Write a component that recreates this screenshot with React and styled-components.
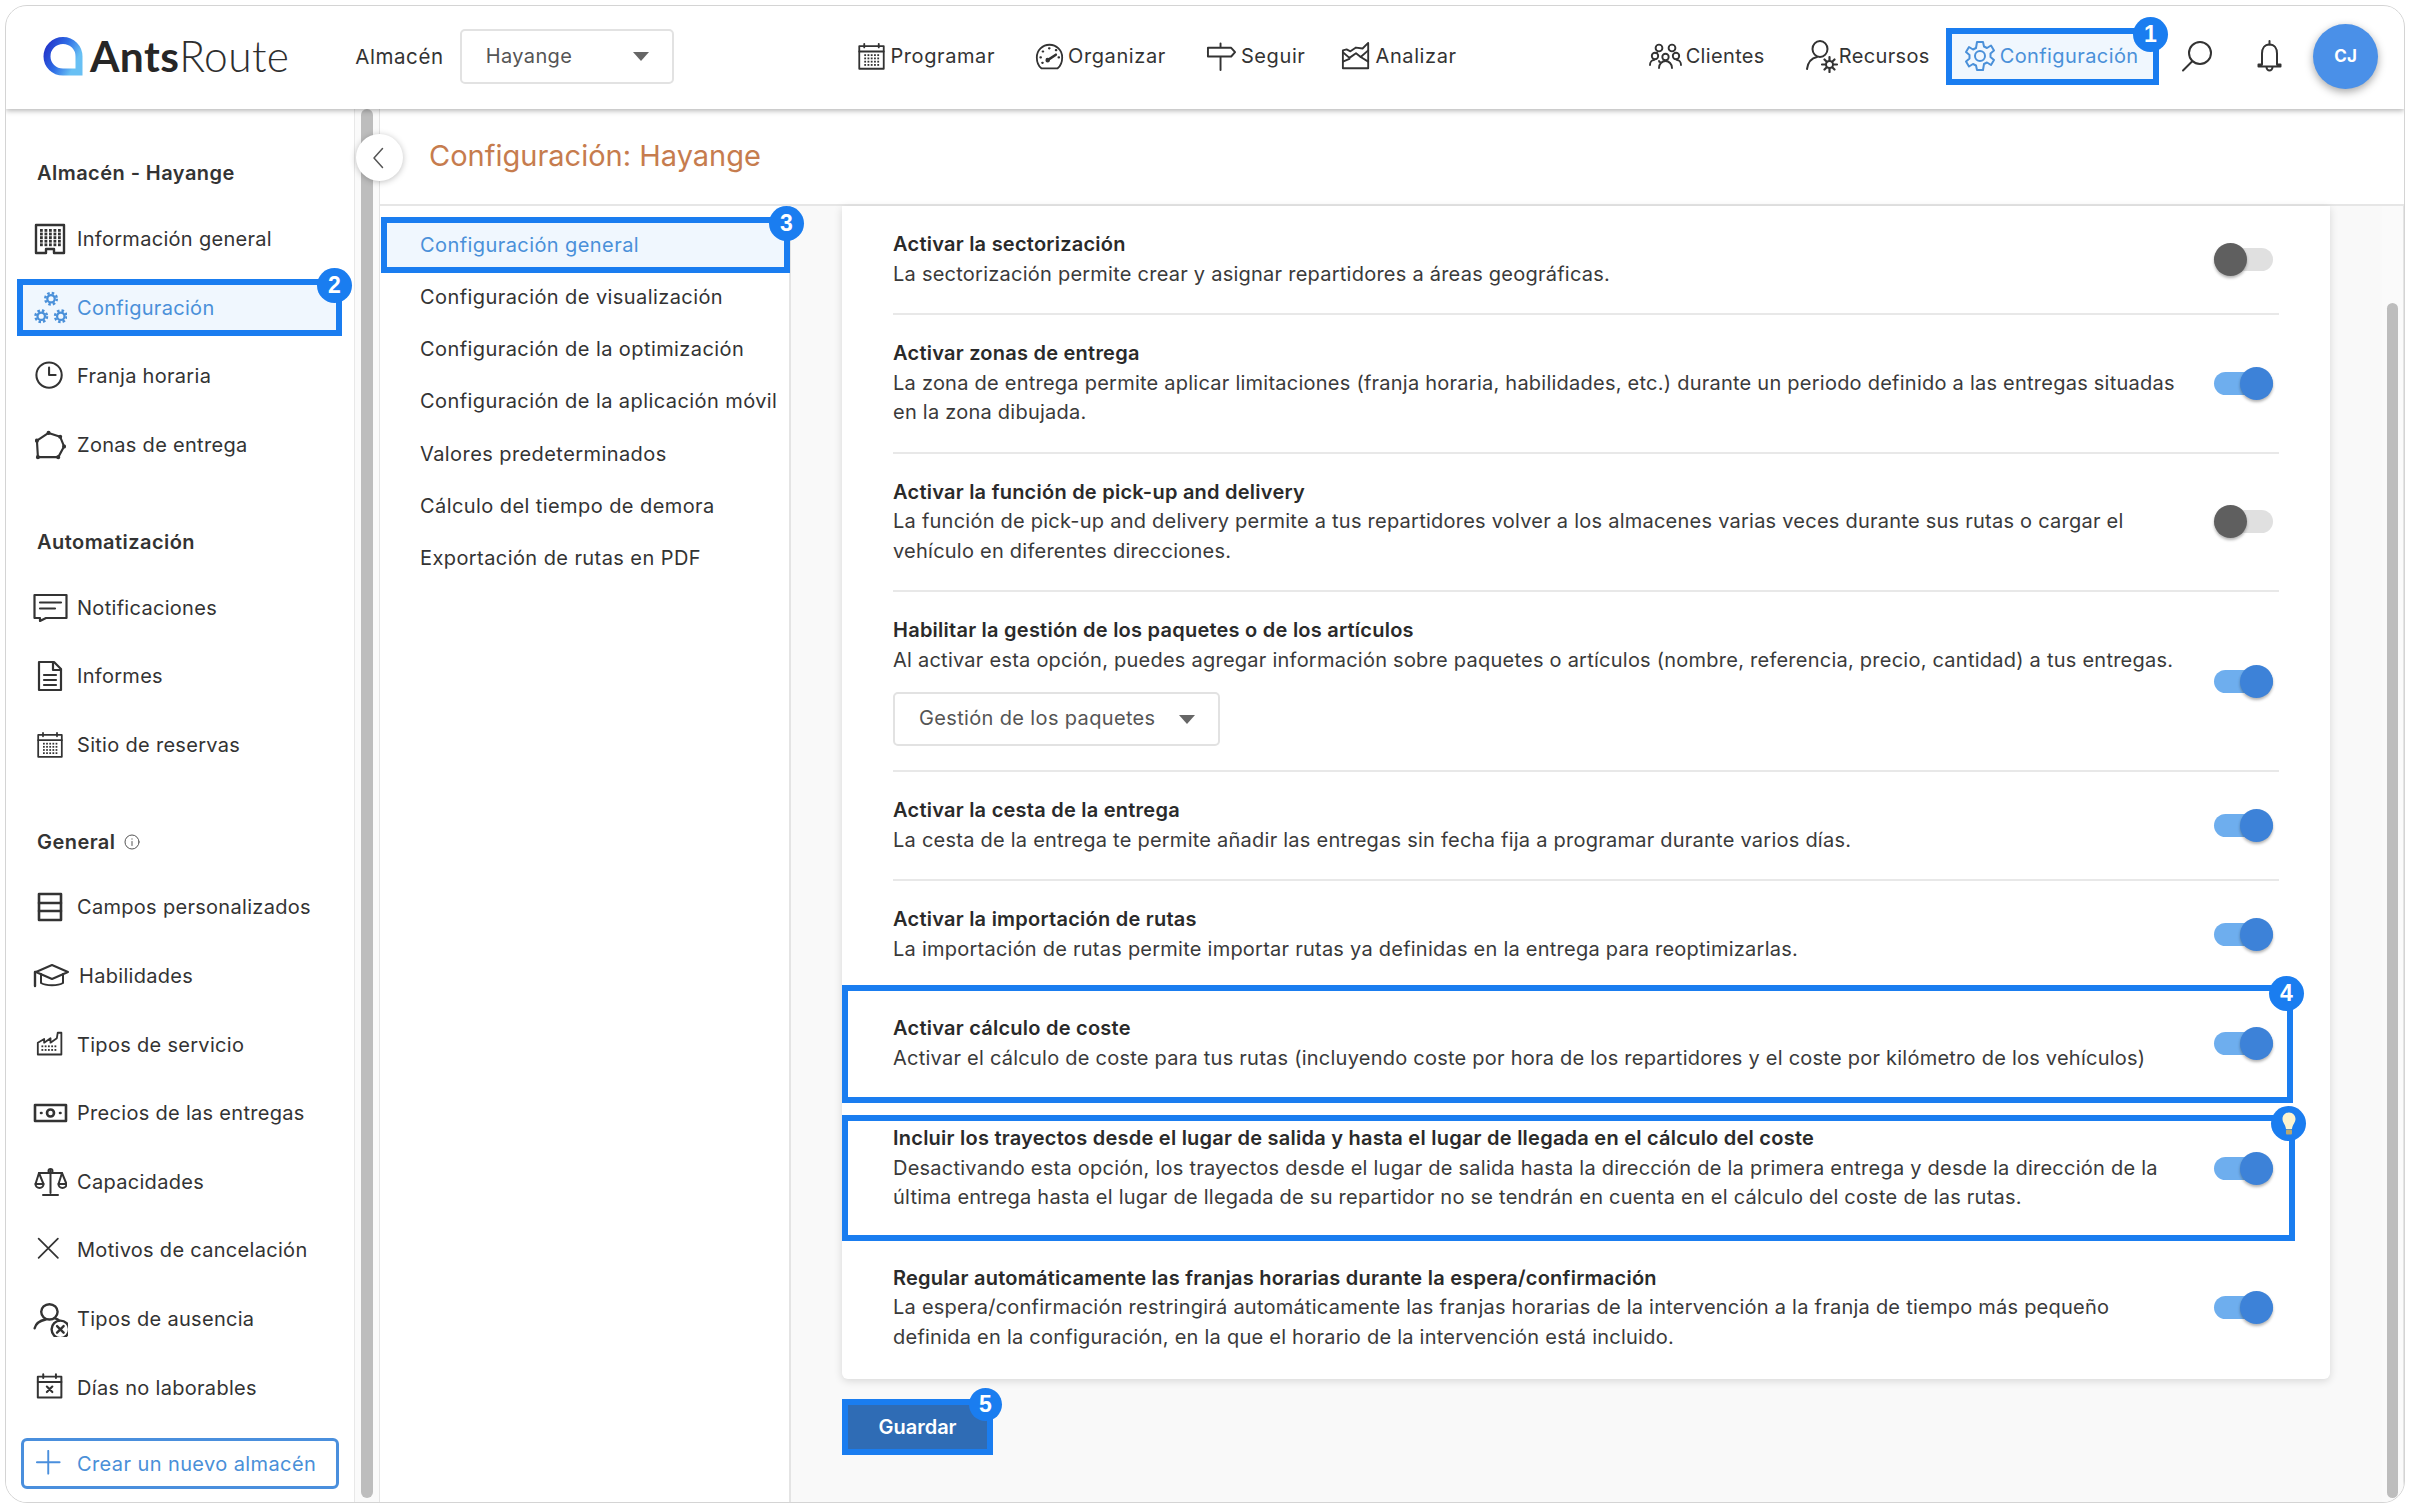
import React from 'react';
import styled, { createGlobalStyle } from 'styled-components';

const FONT = '"Inter", "Liberation Sans", sans-serif';
const BLUE = '#1a7df0';

const GlobalStyle = createGlobalStyle`
  html, body { margin: 0; padding: 0; background: #fff; }
  body { font-family: ${FONT}; color: #333; }
  * { box-sizing: border-box; }
`;

/* shell */
const Page = styled.div`
  width: 2410px;
  height: 1507px;
  padding: 5px 5px 4px 5px;
`;

const Frame = styled.div`
  position: relative;
  width: 100%;
  height: 100%;
  display: flex;
  flex-direction: column;
  border: 1px solid #d4d4d4;
  border-radius: 22px;
  overflow: hidden;
  background: #fff;
`;

/* header */
const Header = styled.header`
  position: relative;
  z-index: 3;
  flex: 0 0 103px;
  display: flex;
  align-items: center;
  padding: 0 26px 3px 36px;
  background: #fff;
  box-shadow: 0 2px 5px rgba(0, 0, 0, 0.28);
`;

const LogoWrap = styled.div`
  display: flex;
  align-items: center;
  gap: 6px;
  width: 314px;
`;

const LogoText = styled.div`
  font-family: "Lato", sans-serif;
  font-size: 42.5px;
  line-height: 50px;
  color: #2e2e2e;
  font-weight: 300;
  letter-spacing: 0.4px;
  b { font-weight: 700; color: #262626; }
`;

const FieldLabel = styled.span`
  font-size: 20.5px;
  letter-spacing: 0.6px;
  width: 105px;
  color: #333;
`;

const Select = styled.div`
  display: flex;
  align-items: center;
  justify-content: space-between;
  width: ${(p) => p.$width}px;
  height: ${(p) => p.$height}px;
  padding: 0 23px 0 24px;
  border: 2px solid #e2e2e2;
  border-radius: 5px;
  background: #fff;
  font-size: 20px;
  letter-spacing: 0.35px;
  color: #555;
`;

const Caret = styled.span`
  width: 0;
  height: 0;
  border-left: 8px solid transparent;
  border-right: 8px solid transparent;
  border-top: 9px solid #666;
`;

const NavGroup = styled.nav`
  display: flex;
  align-items: center;
  gap: ${(p) => p.$gap}px;
  margin-left: ${(p) => p.$offset}px;
`;

const NavItem = styled.div`
  position: relative;
  display: flex;
  align-items: center;
  gap: ${(p) => (p.$gap === undefined ? 4 : p.$gap)}px;
  margin-left: ${(p) => p.$pull || 0}px;
  font-size: 20px;
  letter-spacing: ${(p) => (p.$tight ? 0.35 : 0.6)}px;
  color: #333;
  white-space: nowrap;
`;

const HighlightNav = styled(NavItem)`
  width: 214px;
  height: 57px;
  margin-left: 16px;
  padding-left: 12px;
  border: 6px solid ${BLUE};
  background: #f0f7fe;
  color: #4a90d9;
  letter-spacing: 0.4px;
`;

const IconButton = styled.div`
  display: flex;
  margin-left: ${(p) => p.$offset}px;
`;

const Avatar = styled.div`
  width: 65px;
  height: 65px;
  margin-left: 31px;
  display: flex;
  align-items: center;
  justify-content: center;
  border-radius: 50%;
  background: #4a90e8;
  color: #fff;
  font-size: 17px;
  font-weight: 700;
  box-shadow: 0 3px 8px rgba(0, 0, 0, 0.35);
`;

const Step = styled.span`
  position: absolute;
  z-index: 2;
  top: ${(p) => p.$top}px;
  right: ${(p) => p.$right}px;
  width: ${(p) => p.$size || 35}px;
  height: ${(p) => p.$size || 35}px;
  display: flex;
  align-items: center;
  justify-content: center;
  border-radius: 50%;
  background: ${BLUE};
  color: #fff;
  font-family: "Liberation Sans", sans-serif;
  font-size: 23px;
  font-weight: 700;
`;

/* body */
const Body = styled.div`
  position: relative;
  flex: 1;
  min-height: 0;
  display: flex;
`;

const Sidebar = styled.aside`
  flex: 0 0 349px;
  padding: 0 12px 13px 11px;
  display: flex;
  flex-direction: column;
  background: #fff;
  border-right: 1px solid #e8e8e8;
`;

const SideTitle = styled.div`
  display: flex;
  align-items: center;
  gap: 8px;
  height: 30px;
  margin: ${(p) => p.$top}px 0 ${(p) => p.$bottom}px 20px;
  font-size: 20px;
  font-weight: 600;
  letter-spacing: 0.45px;
  color: #333;
`;

const SideItem = styled.div`
  position: relative;
  display: flex;
  align-items: center;
  height: ${(p) => (p.$active ? 57 : 68.6)}px;
  margin: ${(p) => (p.$active ? '5.8px 0' : '0')};
  padding-left: ${(p) => (p.$active ? 9 : 15)}px;
  border: ${(p) => (p.$active ? `6px solid ${BLUE}` : '0')};
  background: ${(p) => (p.$active ? '#f0f7fe' : 'transparent')};
  color: ${(p) => (p.$active ? '#4a90d9' : '#333')};
  font-size: 20px;
  letter-spacing: 0.3px;
  white-space: nowrap;
`;

const SideIcon = styled.span`
  flex: 0 0 36px;
  display: flex;
  justify-content: center;
  margin-right: 9px;
`;

const NewButton = styled.div`
  margin: auto 3px 0 4px;
  height: 51px;
  display: flex;
  align-items: center;
  gap: 13px;
  padding-left: 12px;
  border: 3px solid #4a8fdd;
  border-radius: 6px;
  color: #4a8fd8;
  font-size: 20px;
  letter-spacing: 0.4px;
  white-space: nowrap;
`;

const ScrollGutter = styled.div`
  flex: 0 0 ${(p) => p.$width}px;
  padding: ${(p) => p.$top}px ${(p) => p.$inner}px 4px;
  background: #fafafa;
  border-right: 1px solid #e4e4e4;
`;

const ScrollThumb = styled.div`
  height: 100%;
  background: #bdbdbd;
  border-radius: 7px;
`;

const Collapse = styled.button`
  position: absolute;
  z-index: 2;
  top: 25px;
  left: 350px;
  width: 47px;
  height: 47px;
  padding: 0 4px 0 0;
  display: flex;
  align-items: center;
  justify-content: center;
  border: 0;
  border-radius: 50%;
  background: #fff;
  box-shadow: 0 1px 6px rgba(0, 0, 0, 0.25);
`;

const Content = styled.main`
  flex: 1;
  min-width: 0;
  display: flex;
  flex-direction: column;
`;

const TitleBar = styled.div`
  flex: 0 0 97px;
  padding: 0 0 2px 49px;
  display: flex;
  align-items: center;
  border-bottom: 2px solid #e6e6e6;
  background: #fff;
  font-size: 29px;
  color: #c67c4e;
`;

const Columns = styled.div`
  flex: 1;
  min-height: 0;
  display: flex;
`;

const SubMenu = styled.div`
  flex: 0 0 411px;
  padding-top: 10.5px;
  border-right: 2px solid #e4e4e4;
  background: #fff;
`;

const SubItem = styled.div`
  position: relative;
  display: flex;
  align-items: center;
  height: ${(p) => (p.$active ? 56 : 52.3)}px;
  margin: ${(p) => (p.$active ? '0 -1px -2px 1px' : '0')};
  padding-left: ${(p) => (p.$active ? 33 : 40)}px;
  border: ${(p) => (p.$active ? `6px solid ${BLUE}` : '0')};
  background: ${(p) => (p.$active ? '#f0f7fe' : 'transparent')};
  color: ${(p) => (p.$active ? '#4a90d9' : '#333')};
  font-size: 20px;
  letter-spacing: 0.42px;
  white-space: nowrap;
`;

const SettingsPane = styled.div`
  flex: 1;
  min-width: 0;
  padding: 0 52px 0 51px;
  background: #f9f9f9;
`;

const Card = styled.section`
  padding: 0 51px;
  background: #fff;
  border-radius: 0 0 6px 6px;
  box-shadow: 0 2px 8px rgba(0, 0, 0, 0.14);
`;

const Row = styled.div`
  position: relative;
  display: flex;
  align-items: center;
  justify-content: space-between;
  padding: 24px 6px ${(p) => (p.$plain ? 27 : 24)}px 0;
  border-bottom: ${(p) => (p.$plain ? '0' : '2px solid #e8e8e8')};
`;

const RowText = styled.div`
  font-size: 20px;
  line-height: 29.5px;
  letter-spacing: 0.24px;
  color: #3a3a3a;
  white-space: nowrap;
`;

const RowTitle = styled.div`
  font-weight: 600;
  color: #2a2a2a;
`;

const SelectSlot = styled.div`
  margin: 17px 0 0;
`;

const Toggle = styled.span`
  position: relative;
  flex: 0 0 59px;
  height: 23px;
  border-radius: 12px;
  background: ${(p) => (p.$on ? '#6eaeee' : '#e0e0e0')};
`;

const Knob = styled.span`
  position: absolute;
  top: -5px;
  ${(p) => (p.$on ? 'right: 0;' : 'left: 0;')}
  width: 33px;
  height: 33px;
  border-radius: 50%;
  background: ${(p) => (p.$on ? '#3d82d8' : '#5f5f5f')};
  box-shadow: 0 2px 3px rgba(0, 0, 0, 0.3);
`;

const Callout = styled.div`
  position: absolute;
  top: ${(p) => p.$top}px;
  bottom: ${(p) => p.$bottom}px;
  left: -51px;
  right: ${(p) => p.$right}px;
  border: 6px solid ${BLUE};
  pointer-events: none;
`;

const SaveButton = styled.button`
  position: relative;
  display: block;
  width: 151px;
  height: 56px;
  margin-top: 20px;
  padding: 0;
  border: 6px solid ${BLUE};
  background: #2f6cb5;
  color: #fff;
  font-family: ${FONT};
  font-size: 20px;
  font-weight: 600;
`;

/* icons */
const Svg = ({ size = 32, w, h, vb = '0 0 32 32', sw = 2, color = 'currentColor', children }) => (
  <svg width={w || size} height={h || size} viewBox={vb} fill="none" stroke={color} strokeWidth={sw} strokeLinecap="round" strokeLinejoin="round">
    {children}
  </svg>
);

const LogoMark = () => (
  <svg width="42" height="40" viewBox="0 0 42 40" fill="none">
    <defs>
      <linearGradient id="ring" x1="0" y1="0" x2="1" y2="0.5">
        <stop offset="0" stopColor="#2230c8" />
        <stop offset="0.55" stopColor="#2f6fe6" />
        <stop offset="1" stopColor="#68c0f4" />
      </linearGradient>
    </defs>
    <path d="M21 4.5C30 4.5 37 11.5 37 20.5V36H21C12 36 5 29 5 20.5C5 11.5 12 4.5 21 4.5Z" stroke="url(#ring)" strokeWidth="7" />
  </svg>
);

const dots = (x, y, cols, rows, dx, dy, s = 1.6) => {
  const out = [];
  for (let r = 0; r < rows; r++) {
    for (let c = 0; c < cols; c++) {
      out.push(<rect key={`${r}-${c}`} x={x + c * dx} y={y + r * dy} width={s} height={s} fill="currentColor" stroke="none" />);
    }
  }
  return out;
};

const CalendarIcon = ({ size = 29 }) => (
  <Svg size={size}>
    <rect x="2.5" y="4.5" width="27" height="25" />
    <path d="M2.5 10.5h27M8 2v4M24 2v4" />
    {dots(8, 13.5, 5, 4, 3.6, 3.6, 2)}
  </Svg>
);

const GaugeIcon = () => (
  <Svg size={29}>
    <path d="M7 29C3.5 26 2 22 2 17A14 14 0 0 1 30 17C30 22 28.5 26 25 29Z" />
    <path d="M14 20l9-6" strokeWidth="2.8" />
    <path d="M6 17h.5M8.5 10.5h.5M15.5 7h.5M23 9h.5M26 17h.5M8 23h.5" strokeWidth="2.4" />
    <circle cx="14" cy="20" r="1.5" />
  </Svg>
);

const SignIcon = () => (
  <Svg size={31}>
    <path d="M2 7h24l4 4.500-4 4.500H2ZM15 2.500V7M15 16v14" />
  </Svg>
);

const ChartIcon = () => (
  <Svg size={30}>
    <path d="M2 10v19h27V2l-6 6-7-1-6 4-4-2z" />
    <path d="M2 12l7 6 7-5 5 4 8-7" />
    <path d="M2 22l7-3M21 17l8 5" />
  </Svg>
);

const PeopleIcon = () => (
  <Svg w={35} h={26} vb="0 0 35 26" sw={1.9}>
    <circle cx="11" cy="5" r="3.4" />
    <circle cx="24" cy="5" r="3.4" />
    <circle cx="7" cy="13" r="3.2" />
    <circle cx="17.5" cy="14" r="3.2" />
    <circle cx="28" cy="13" r="3.2" />
    <path d="M2 22c0-3 2-5 4-5M12 19c-.5 0-1-.5-1-1M9 9.500l-1 .5" />
    <path d="M11 25c0-4 3-7 6.500-7S24 21 24 25" />
    <path d="M33 22c0-3-2-5-4-5" />
  </Svg>
);

const PersonGearIcon = () => (
  <Svg w={34} h={34} vb="0 0 34 34">
    <ellipse cx="15" cy="10" rx="7.5" ry="8" />
    <path d="M2 30c1-7 5-11 10-12" />
    <circle cx="24.5" cy="25.5" r="3.5" />
    <path d="M24.5 18v3M24.5 30v3M17 25.5h3.5M28.5 25.5H32M19.5 20.5l2 2M27.5 28.5l2 2M19.5 30.5l2-2M27.5 22.5l2-2" strokeWidth="2.2" />
  </Svg>
);

const GEAR = 'M13 2h6l1 4.5 3 1.5 4-2.5 3 5-3.5 3v3.5l3.5 3-3 5-4-2.5-3 1.500L19 30h-6l-1-4.500-3-1.500-4 2.500-3-5 3.500-3V15L2 12l3-5 4 2.500 3-1.500Z';

const GearIcon = () => (
  <Svg size={32}>
    <path d={GEAR} />
    <circle cx="16" cy="16" r="5" />
  </Svg>
);

const SearchIcon = () => (
  <Svg size={32}>
    <circle cx="19" cy="13" r="11" />
    <path d="M11 21.500 2 30.500" />
  </Svg>
);

const BellIcon = () => (
  <Svg w={25} h={32} vb="0 0 25 32">
    <path d="M12.500 4.500c-5 0-7.500 4-7.500 9v11H1.500v2h22v-2H20v-11c0-5-2.500-9-7.500-9Z" />
    <path d="M12.500 1v3.500M9.500 27c0 2 1.500 3.500 3 3.500s3-1.500 3-3.500" />
  </Svg>
);

const BuildingIcon = () => (
  <Svg size={32}>
    <path d="M2 2h28v28H20v-4h-8v4H2Z" strokeWidth="2.4" />
    {dots(6, 6, 5, 5, 4.500, 3.600, 2.800)}
  </Svg>
);

/* one small gear: a ring with a dashed outer ring for the teeth */
const SmallGear = ({ cx, cy }) => (
  <g>
    <circle cx={cx} cy={cy} r="3.6" strokeWidth="2.2" />
    <circle cx={cx} cy={cy} r="5.6" strokeWidth="2.4" strokeLinecap="butt" strokeDasharray="2.4 2" />
  </g>
);

const GearsIcon = () => (
  <Svg size={33} color="#4a90d9">
    <SmallGear cx={16.5} cy={7.5} />
    <SmallGear cx={7} cy={24.5} />
    <SmallGear cx={26} cy={24.5} />
  </Svg>
);

const ClockIcon = () => (
  <Svg size={30} sw={2.200}>
    <circle cx="15" cy="15" r="13.500" />
    <path d="M15 7v8h7" />
  </Svg>
);

const ZoneIcon = () => (
  <Svg size={31} sw={2.200}>
    <path d="M14 3 26 7l4 10-6 11H3L2 11Z" />
    <g fill="currentColor">
      <circle cx="14" cy="3" r="1" /><circle cx="26" cy="7" r="1" /><circle cx="30" cy="17" r="1" />
      <circle cx="24" cy="28" r="1" /><circle cx="3" cy="28" r="1" /><circle cx="2" cy="11" r="1" />
    </g>
  </Svg>
);

const MessageIcon = () => (
  <Svg w={35} h={29} vb="0 0 35 29" sw={2.200}>
    <path d="M1.500 2h32v23H13l-6 3v-3H1.500Z" />
    <path d="M7 9.500h21M7 15.500h15" />
  </Svg>
);

const FileIcon = () => (
  <Svg w={26} h={32} vb="0 0 26 32" sw={2.200}>
    <path d="M2 2h15l7 7v21H2Z" />
    <path d="M16 2v8h8M7 15h12M7 20h12M7 25h12" />
  </Svg>
);

const RowsIcon = () => (
  <Svg w={26} h={30} vb="0 0 26 30" sw={2.600}>
    <rect x="2" y="2" width="22" height="26" />
    <path d="M2 11h22M2 19h22" />
  </Svg>
);

const CapIcon = () => (
  <Svg w={38} h={26} vb="0 0 38 26">
    <path d="M4 9 20 2l16 7-16 7Z" />
    <path d="M9 11v9c5 3 17 3 22 0v-9" />
    <path d="M4 9h-1v14" strokeWidth="2.400" />
  </Svg>
);

const FactoryIcon = () => (
  <Svg size={29}>
    <path d="M2 27V14l7-4v4l7-5v5l7-5 1-6h4v24Z" />
    {dots(6, 17, 5, 2, 3.600, 4, 2)}
  </Svg>
);

const BillIcon = () => (
  <Svg w={35} h={20} vb="0 0 35 20" sw={2.600}>
    <rect x="2" y="2" width="31" height="16" />
    <circle cx="17.500" cy="10" r="3.500" />
    <path d="M8 10h.5M27 10h.5" />
  </Svg>
);

const ScaleIcon = () => (
  <Svg w={33} h={30} vb="0 0 33 30">
    <path d="M16.500 3v23M9 28h15M5 6h23" />
    <circle cx="16.500" cy="4" r="2" />
    <path d="M5 6 1.500 17h8ZM28 6l-3.500 11h8Z" />
    <path d="M1.500 17a4 4 0 0 0 8 0M24.500 17a4 4 0 0 0 8 0" />
  </Svg>
);

const CrossIcon = () => (
  <Svg size={28}>
    <path d="M3 3l22 22M25 3 3 25" />
  </Svg>
);

const PersonOffIcon = () => (
  <Svg size={35} sw={2.200}>
    <ellipse cx="15" cy="9" rx="7.500" ry="7" />
    <path d="M1.500 24c1-4 5-7 10-8M20 15c2 .5 3 1 4 2" />
    <circle cx="25" cy="25" r="8" />
    <path d="M22 22l6 6M28 22l-6 6" />
  </Svg>
);

const CalendarOffIcon = () => (
  <Svg size={29}>
    <rect x="2" y="4" width="26" height="23" strokeWidth="2.200" />
    <path d="M2 10h26M8 1.500v4M22 1.500v4" strokeWidth="2.200" />
    <path d="M12 15l6 6M18 15l-6 6" strokeWidth="2.400" />
  </Svg>
);

const InfoIcon = () => (
  <Svg size={16} vb="0 0 16 16" sw={1} color="#555">
    <circle cx="8" cy="8" r="7" />
    <path d="M8 7.500v4M8 4.800v.4" />
  </Svg>
);

const PlusIcon = () => (
  <Svg size={28} sw={2.200} color="#4a8fdd">
    <path d="M14 1v26M1 14h26" />
  </Svg>
);

const Chevron = () => (
  <Svg w={12} h={22} vb="0 0 12 22" sw={1.500} color="#555">
    <path d="M10.500 1.500 2 11l8.500 9.500" />
  </Svg>
);

const BulbIcon = () => (
  <svg width="14" height="23" viewBox="0 0 14 23">
    <path d="M7 .5C3 .5.5 3.500.5 7c0 3.500 3 5.500 3.500 10h6c.5-4.500 3.500-6.500 3.500-10C13.500 3.500 11 .5 7 .5Z" fill="#fbf3cf" />
    <rect x="4" y="17.500" width="6" height="5" rx="1" fill="#b9a870" />
  </svg>
);

/* data */
const warehouseItems = [
  { label: 'Información general', icon: <BuildingIcon /> },
  { label: 'Configuración', icon: <GearsIcon />, step: 2 },
  { label: 'Franja horaria', icon: <ClockIcon /> },
  { label: 'Zonas de entrega', icon: <ZoneIcon /> },
];

const automationItems = [
  { label: 'Notificaciones', icon: <MessageIcon /> },
  { label: 'Informes', icon: <FileIcon /> },
  { label: 'Sitio de reservas', icon: <CalendarIcon size={28} /> },
];

const generalItems = [
  { label: 'Campos personalizados', icon: <RowsIcon /> },
  { label: 'Habilidades', icon: <CapIcon /> },
  { label: 'Tipos de servicio', icon: <FactoryIcon /> },
  { label: 'Precios de las entregas', icon: <BillIcon /> },
  { label: 'Capacidades', icon: <ScaleIcon /> },
  { label: 'Motivos de cancelación', icon: <CrossIcon /> },
  { label: 'Tipos de ausencia', icon: <PersonOffIcon /> },
  { label: 'Días no laborables', icon: <CalendarOffIcon /> },
];

const subMenu = [
  'Configuración general',
  'Configuración de visualización',
  'Configuración de la optimización',
  'Configuración de la aplicación móvil',
  'Valores predeterminados',
  'Cálculo del tiempo de demora',
  'Exportación de rutas en PDF',
];

const settings = [
  {
    title: 'Activar la sectorización',
    lines: ['La sectorización permite crear y asignar repartidores a áreas geográficas.'],
    on: false,
  },
  {
    title: 'Activar zonas de entrega',
    lines: [
      'La zona de entrega permite aplicar limitaciones (franja horaria, habilidades, etc.) durante un periodo definido a las entregas situadas',
      'en la zona dibujada.',
    ],
    on: true,
  },
  {
    title: 'Activar la función de pick-up and delivery',
    lines: [
      'La función de pick-up and delivery permite a tus repartidores volver a los almacenes varias veces durante sus rutas o cargar el',
      'vehículo en diferentes direcciones.',
    ],
    on: false,
  },
  {
    title: 'Habilitar la gestión de los paquetes o de los artículos',
    lines: ['Al activar esta opción, puedes agregar información sobre paquetes o artículos (nombre, referencia, precio, cantidad) a tus entregas.'],
    on: true,
    select: 'Gestión de los paquetes',
  },
  {
    title: 'Activar la cesta de la entrega',
    lines: ['La cesta de la entrega te permite añadir las entregas sin fecha fija a programar durante varios días.'],
    on: true,
  },
  {
    title: 'Activar la importación de rutas',
    lines: ['La importación de rutas permite importar rutas ya definidas en la entrega para reoptimizarlas.'],
    on: true,
  },
  {
    title: 'Activar cálculo de coste',
    lines: ['Activar el cálculo de coste para tus rutas (incluyendo coste por hora de los repartidores y el coste por kilómetro de los vehículos)'],
    on: true,
    callout: { top: -5, bottom: -3, right: -14, step: '4' },
    plain: true,
  },
  {
    title: 'Incluir los trayectos desde el lugar de salida y hasta el lugar de llegada en el cálculo del coste',
    lines: [
      'Desactivando esta opción, los trayectos desde el lugar de salida hasta la dirección de la primera entrega y desde la dirección de la',
      'última entrega hasta el lugar de llegada de su repartidor no se tendrán en cuenta en el cálculo del coste de las rutas.',
    ],
    on: true,
    callout: { top: 15, bottom: -1, right: -16, bulb: true },
    plain: true,
  },
  {
    title: 'Regular automáticamente las franjas horarias durante la espera/confirmación',
    lines: [
      'La espera/confirmación restringirá automáticamente las franjas horarias de la intervención a la franja de tiempo más pequeño',
      'definida en la configuración, en la que el horario de la intervención está incluido.',
    ],
    on: true,
    plain: true,
  },
];

const SideLink = ({ item }) => (
  <SideItem $active={!!item.step}>
    <SideIcon>{item.icon}</SideIcon>
    {item.label}
    {item.step && <Step $top={-17} $right={-16}>{item.step}</Step>}
  </SideItem>
);

const App = () => (
  <Page>
    <GlobalStyle />
    <Frame>
      <Header>
        <LogoWrap>
          <LogoMark />
          <LogoText><b>Ants</b>Route</LogoText>
        </LogoWrap>
        <FieldLabel>Almacén</FieldLabel>
        <Select $width={215} $height={55}>
          Hayange
          <Caret />
        </Select>
        <NavGroup $gap={40} $offset={183}>
          <NavItem><CalendarIcon /> Programar</NavItem>
          <NavItem><GaugeIcon /> Organizar</NavItem>
          <NavItem><SignIcon /> Seguir</NavItem>
          <NavItem $pull={-4}><ChartIcon /> Analizar</NavItem>
        </NavGroup>
        <NavGroup $gap={40} $offset={191}>
          <NavItem $gap={3} $tight><PeopleIcon /> Clientes</NavItem>
          <NavItem $gap={0} $tight><PersonGearIcon /> Recursos</NavItem>
        </NavGroup>
        <HighlightNav>
          <GearIcon /> Configuración
          <Step $top={-17} $right={-15}>1</Step>
        </HighlightNav>
        <IconButton $offset={22}><SearchIcon /></IconButton>
        <IconButton $offset={44}><BellIcon /></IconButton>
        <Avatar>CJ</Avatar>
      </Header>
      <Body>
        <Sidebar>
          <SideTitle $top={48.5} $bottom={17.5}>Almacén - Hayange</SideTitle>
          {warehouseItems.map((item) => <SideLink key={item.label} item={item} />)}
          <SideTitle $top={48} $bottom={16}>Automatización</SideTitle>
          {automationItems.map((item) => <SideLink key={item.label} item={item} />)}
          <SideTitle $top={48} $bottom={16}>General <InfoIcon /></SideTitle>
          {generalItems.map((item) => <SideLink key={item.label} item={item} />)}
          <NewButton><PlusIcon /> Crear un nuevo almacén</NewButton>
        </Sidebar>
        <ScrollGutter $width={25} $top={0} $inner={6}><ScrollThumb /></ScrollGutter>
        <Collapse><Chevron /></Collapse>
        <Content>
          <TitleBar>Configuración: Hayange</TitleBar>
          <Columns>
            <SubMenu>
              {subMenu.map((label, i) => (
                <SubItem key={label} $active={i === 0}>
                  {label}
                  {i === 0 && <Step $top={-17} $right={-20}>3</Step>}
                </SubItem>
              ))}
            </SubMenu>
            <SettingsPane>
              <Card>
                {settings.map((s) => (
                  <Row key={s.title} $plain={s.plain}>
                    <RowText>
                      <RowTitle>{s.title}</RowTitle>
                      {s.lines.map((line) => <div key={line}>{line}</div>)}
                      {s.select && (
                        <SelectSlot>
                          <Select $width={327} $height={54}>
                            {s.select}
                            <Caret />
                          </Select>
                        </SelectSlot>
                      )}
                    </RowText>
                    <Toggle $on={s.on}><Knob $on={s.on} /></Toggle>
                    {s.callout && (
                      <Callout $top={s.callout.top} $bottom={s.callout.bottom} $right={s.callout.right}>
                        <Step $top={-15} $right={-17}>{s.callout.step || <BulbIcon />}</Step>
                      </Callout>
                    )}
                  </Row>
                ))}
              </Card>
              <SaveButton>
                Guardar
                <Step $top={-17} $right={-15} $size={33}>5</Step>
              </SaveButton>
            </SettingsPane>
            <ScrollGutter $width={22} $top={97} $inner={5}><ScrollThumb /></ScrollGutter>
          </Columns>
        </Content>
      </Body>
    </Frame>
  </Page>
);

export default App;
